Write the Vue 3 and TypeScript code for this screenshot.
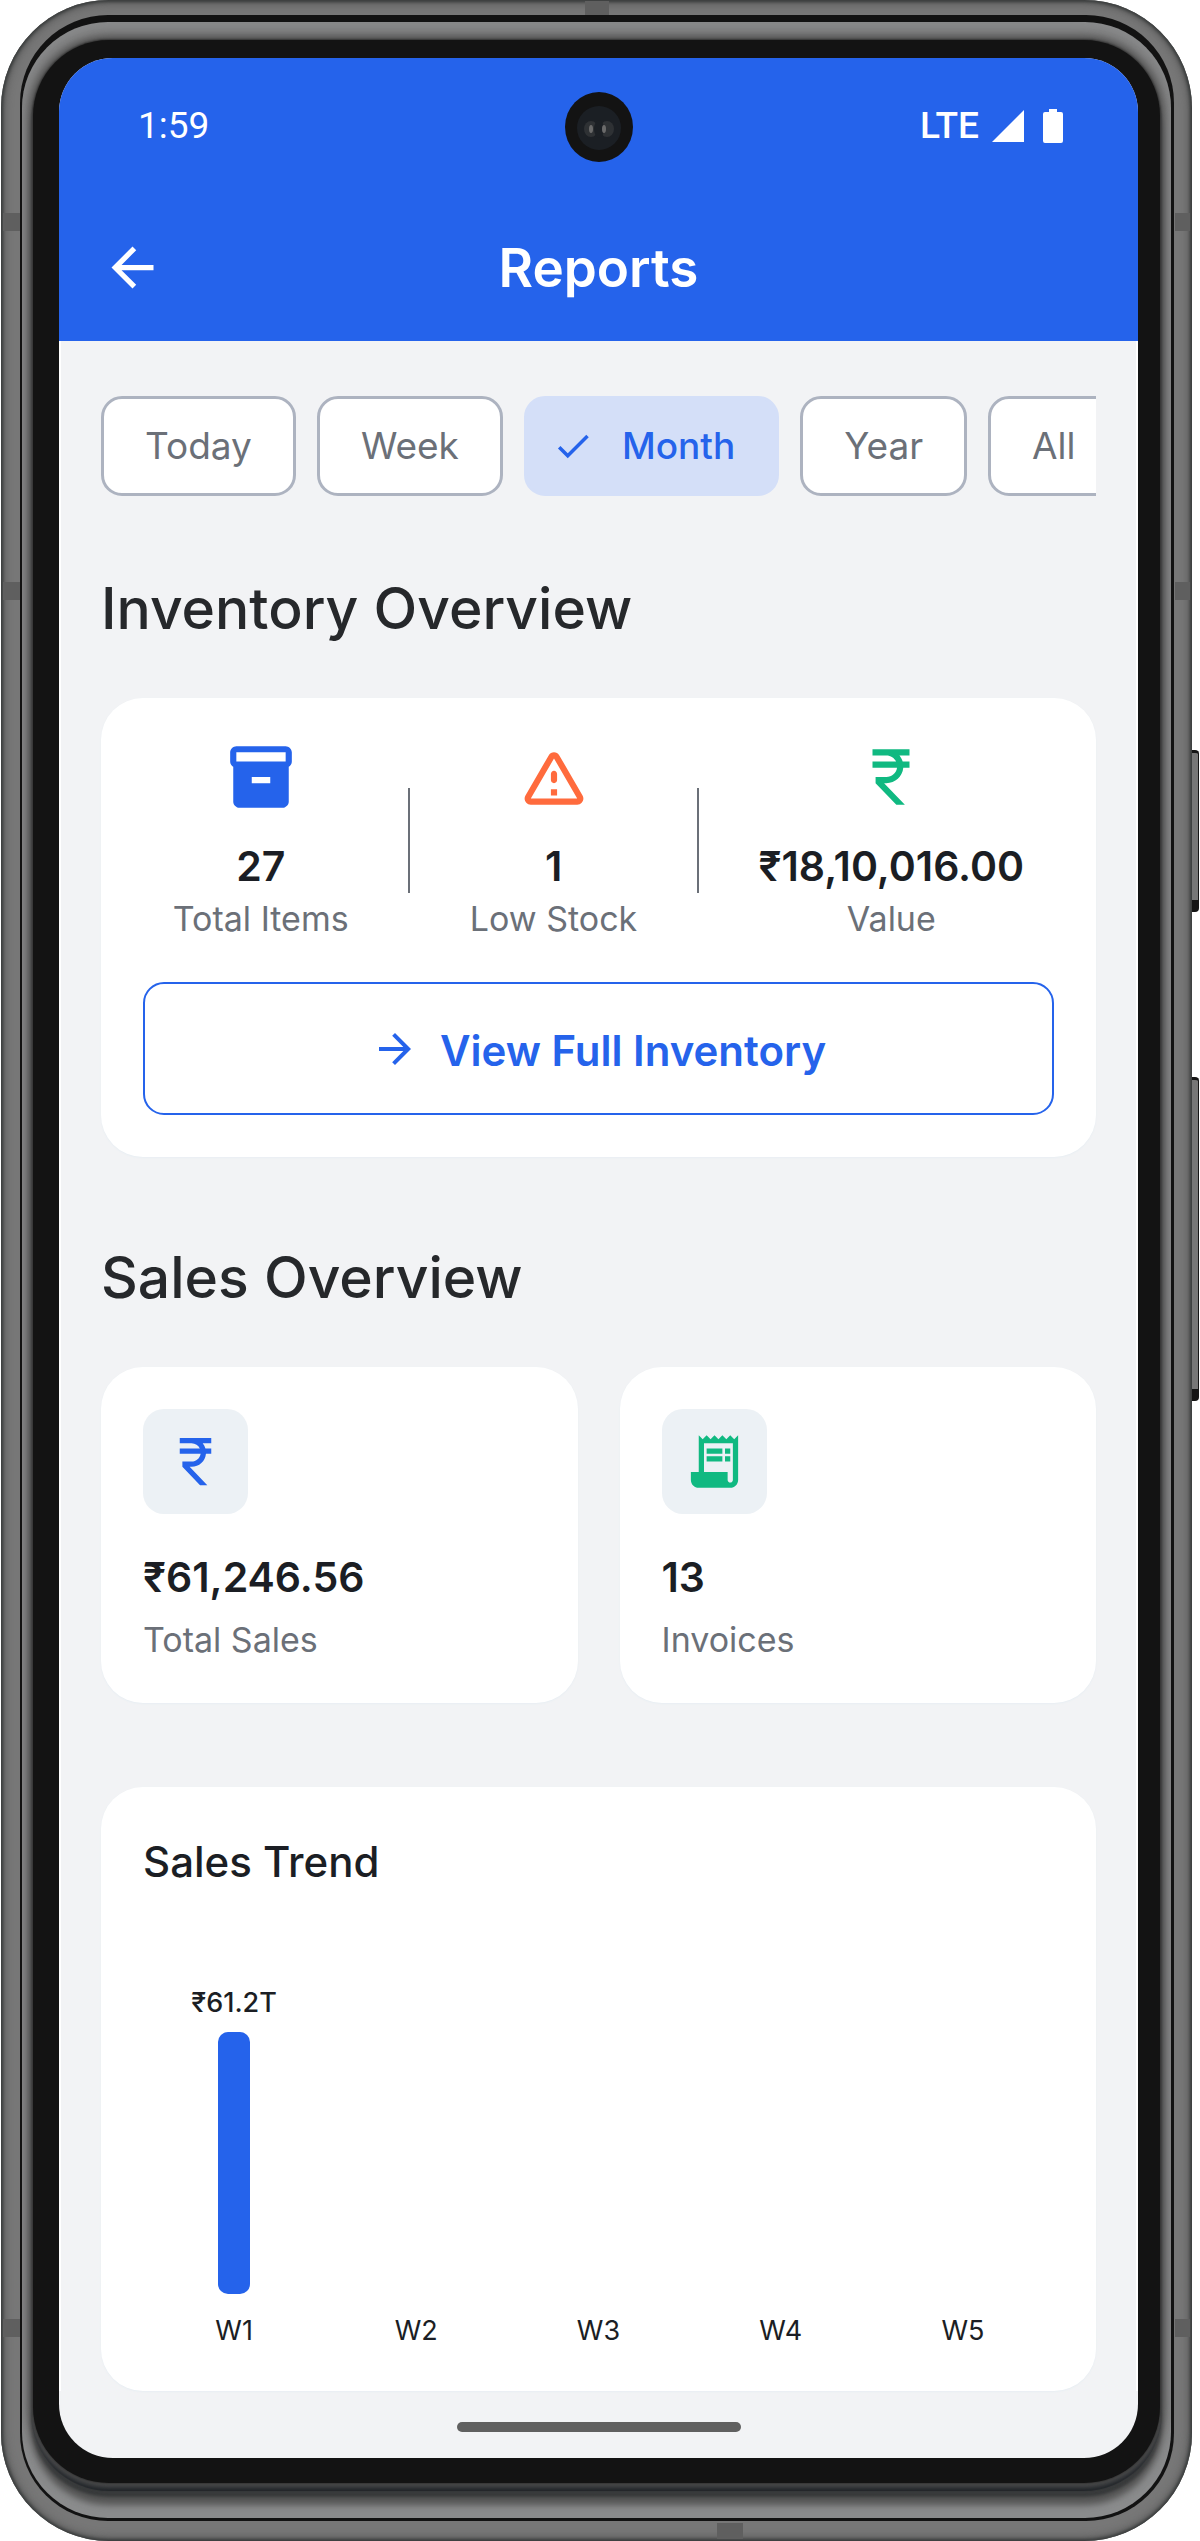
<script setup lang="ts">
import { ref } from 'vue'

interface Stat { icon: string; tone: string; value: string; label: string }
interface Week { label: string; amount: number; caption: string }

const icons: Record<string, string> = {
  back: 'M20 11H7.83l5.59-5.59L12 4l-8 8 8 8 1.41-1.41L7.83 13H20v-2z',
  forward: 'M12 4l-1.41 1.41L16.17 11H4v2h12.17l-5.58 5.59L12 20l8-8z',
  check: 'M9 16.17L4.83 12l-1.42 1.41L9 19 21 7l-1.41-1.41z',
  box: 'M20 2H4c-1 0-2 .9-2 2v3.01c0 .72.43 1.34 1 1.69V20c0 1.1 1.1 2 2 2h14c.9 0 2-.9 2-2V8.7c.57-.35 1-.97 1-1.69V4c0-1.1-1-2-2-2zm-5 12H9v-2h6v2zm5-7H4V4h16v3z',
  warning: 'M12 5.99L19.53 19H4.47L12 5.99M2.74 18c-.77 1.33.19 3 1.73 3h15.06c1.54 0 2.5-1.67 1.73-3L13.73 4.99c-.77-1.33-2.69-1.33-3.46 0L2.74 18zM11 11v2c0 .55.45 1 1 1s1-.45 1-1v-2c0-.55-.45-1-1-1s-1 .45-1 1zm0 5h2v2h-2z',
  rupee: 'M13.66 7c-.56-1.18-1.76-2-3.16-2H6V3h12v2h-3.26c.48.58.84 1.26 1.05 2H18v2h-2.02c-.25 2.8-2.61 5-5.48 5h-.73l6.73 7h-2.77L7 14v-2h3.5c1.76 0 3.22-1.3 3.46-3H6V7h7.66z',
  receipt: 'M19.5 3.5L18 2l-1.5 1.5L15 2l-1.5 1.5L12 2l-1.5 1.5L9 2 7.5 3.5 6 2v14H3v3c0 1.66 1.34 3 3 3h12c1.66 0 3-1.34 3-3V2l-1.5 1.5zM19 19c0 .55-.45 1-1 1s-1-.45-1-1v-3H8V5h11v14zM9 7h6v2H9zM16 7h2v2h-2zM9 10h6v2H9zM16 10h2v2h-2z',
}

const periods = ['Today', 'Week', 'Month', 'Year', 'All']
const period = ref('Month')

const inventory: Stat[] = [
  { icon: 'box', tone: 'blue', value: '27', label: 'Total Items' },
  { icon: 'warning', tone: 'orange', value: '1', label: 'Low Stock' },
  { icon: 'rupee', tone: 'green', value: '₹18,10,016.00', label: 'Value' },
]
const sales: Stat[] = [
  { icon: 'rupee', tone: 'blue', value: '₹61,246.56', label: 'Total Sales' },
  { icon: 'receipt', tone: 'green', value: '13', label: 'Invoices' },
]
const weeks: Week[] = [
  { label: 'W1', amount: 61246.56, caption: '₹61.2T' },
  { label: 'W2', amount: 0, caption: '' },
  { label: 'W3', amount: 0, caption: '' },
  { label: 'W4', amount: 0, caption: '' },
  { label: 'W5', amount: 0, caption: '' },
]
const axisMax = 83450
</script>

<template>
  <div class="device">
    <i class="band left b1"></i><i class="band left b2"></i><i class="band left b3"></i>
    <i class="band right b1"></i><i class="band right b2"></i><i class="band right b3"></i>
    <i class="band top"></i><i class="band bottom"></i>
    <i class="key power"></i><i class="key volume"></i>
    <div class="seam">
      <div class="rim">
        <div class="glass">
          <div class="screen">
            <header class="top-area">
              <div class="status">
                <span class="clock">1:59</span>
                <span class="camera">
                  <svg viewBox="0 0 68 70" width="68" height="70" aria-hidden="true">
                    <ellipse cx="34" cy="35" rx="34" ry="35" fill="#131313" />
                    <circle cx="34" cy="36" r="22" fill="#1b1f24" />
                    <ellipse cx="26" cy="37" rx="7" ry="8" fill="#2e3134" />
                    <ellipse cx="42" cy="37" rx="7" ry="8" fill="#2e3134" />
                    <ellipse cx="34" cy="37" rx="5" ry="9" fill="#1b1f24" />
                    <ellipse cx="26" cy="37" rx="2" ry="4" fill="#6a6a6a" />
                    <ellipse cx="39" cy="37" rx="2" ry="4" fill="#6a6a6a" />
                  </svg>
                </span>
                <span class="signals">
                  <span class="network">LTE</span>
                  <svg class="cell" viewBox="0 0 32 32" width="32" height="32" aria-hidden="true"><path d="M32 0v32H0z" fill="#fff" /></svg>
                  <svg viewBox="0 0 20 34" width="20" height="34" aria-hidden="true"><path d="M6 0h8v3h4a2 2 0 0 1 2 2v27a2 2 0 0 1-2 2H2a2 2 0 0 1-2-2V5a2 2 0 0 1 2-2h4z" fill="#fff" /></svg>
                </span>
              </div>
              <div class="app-bar">
                <button class="back" type="button" aria-label="Back">
                  <svg viewBox="0 0 24 24" width="63" height="63" aria-hidden="true"><path :d="icons.back" fill="currentColor" /></svg>
                </button>
                <h1>Reports</h1>
              </div>
            </header>

            <main class="content">
              <div class="chips">
                <button
                  v-for="p in periods" :key="p" type="button" class="chip"
                  :class="{ selected: p === period }" :aria-pressed="p === period" @click="period = p"
                >
                  <svg v-if="p === period" viewBox="0 0 24 24" width="42" height="42" aria-hidden="true"><path :d="icons.check" fill="currentColor" /></svg>
                  {{ p }}
                </button>
              </div>

              <section>
                <h2>Inventory Overview</h2>
                <div class="card">
                  <div class="stats">
                    <template v-for="(s, i) in inventory" :key="s.label">
                      <span v-if="i > 0" class="divider"></span>
                      <div class="stat">
                        <svg :class="s.tone" viewBox="0 0 24 24" width="74" height="74" aria-hidden="true"><path :d="icons[s.icon]" fill="currentColor" fill-rule="evenodd" /></svg>
                        <span class="value">{{ s.value }}</span>
                        <span class="label">{{ s.label }}</span>
                      </div>
                    </template>
                  </div>
                  <button class="outlined" type="button">
                    <svg viewBox="0 0 24 24" width="48" height="48" aria-hidden="true"><path :d="icons.forward" fill="currentColor" /></svg>
                    <span>View Full Inventory</span>
                  </button>
                </div>
              </section>

              <section>
                <h2>Sales Overview</h2>
                <div class="tiles">
                  <div v-for="s in sales" :key="s.label" class="card tile">
                    <span class="badge" :class="s.tone">
                      <svg viewBox="0 0 24 24" width="63" height="63" aria-hidden="true"><path :d="icons[s.icon]" fill="currentColor" fill-rule="evenodd" /></svg>
                    </span>
                    <span class="value">{{ s.value }}</span>
                    <span class="label">{{ s.label }}</span>
                  </div>
                </div>
              </section>

              <section class="card trend">
                <h3>Sales Trend</h3>
                <div class="chart">
                  <div v-for="w in weeks" :key="w.label" class="week">
                    <div class="plot">
                      <span class="caption">{{ w.caption }}</span>
                      <span v-if="w.amount" class="bar" :style="{ height: (w.amount / axisMax) * 100 + '%' }"></span>
                    </div>
                    <span class="tick">{{ w.label }}</span>
                  </div>
                </div>
              </section>
            </main>
            <footer class="nav"><span class="handle"></span></footer>
          </div>
        </div>
      </div>
    </div>
  </div>
</template>

<style>
body { background: #fff; }
</style>

<style scoped>
* { box-sizing: border-box; }
.device {
  position: relative;
  margin: 0 8px 0 1px;
  padding: 15px 18px 20px 19px;
  border-radius: 108px;
  background: #777;
  box-shadow: inset 0 0 3px 2px #3a3d3d, inset 0 0 8px 3px #555;
  font-family: Inter, "Noto Sans", sans-serif;
  color: #1b1e24;
}
.seam { padding: 7px 3px 3px 2px; border-radius: 88px; background: #121212; }
.rim {
  overflow: hidden;
  padding: 18px 11px 35px;
  border-radius: 86px;
  background: #8a8b8c;
}
.glass {
  padding: 18px 22px 25px 26px;
  border-radius: 76px;
  background: #131313;
  box-shadow: 0 0 2px 1px #333, 0 0 6px 4px #555, 0 6px 1px 2px #1b1f24, 0 12px 3px 2px #383a3b, 0 20px 6px 2px #555, 0 0 14px 8px #717171;
}
.screen { position: relative; overflow: hidden; border-radius: 54px; background: #f2f3f5; }

.band { position: absolute; background: #5f5f5f; }
.left { left: 2px; width: 17px; height: 18px; }
.right { right: 2px; width: 15px; height: 18px; }
.b1 { top: 213px; }
.b2 { top: 582px; }
.b3 { top: 2319px; }
.top { top: 1px; left: 584px; width: 24px; height: 14px; }
.bottom { bottom: 2px; left: 716px; width: 26px; height: 16px; }
.key {
  position: absolute;
  right: -7px;
  width: 7px;
  border: solid #151515;
  border-width: 3px 1px 12px 0;
  border-radius: 0 4px 4px 0;
  background: #777;
}
.power { top: 750px; height: 162px; }
.volume { top: 1077px; height: 324px; }

.top-area { background: #2563eb; color: #fff; }
.status {
  position: relative;
  display: flex;
  align-items: center;
  justify-content: space-between;
  height: 136px;
  padding: 0 75px 0 79px;
  font: 400 37px/44px Roboto, sans-serif;
}
.network { font-weight: 500; }
.camera { position: absolute; left: 50%; top: 34px; width: 68px; height: 70px; margin-left: -34px; }
.camera svg, .signals svg, .back svg { display: block; }
.signals { display: flex; align-items: center; }
.cell { margin: 0 19px 0 13px; }
.app-bar { display: grid; grid-template-columns: 63px 1fr 63px; align-items: center; height: 147px; padding: 0 42px; }
button { font: inherit; cursor: pointer; }
.back { padding: 0; border: 0; background: none; color: inherit; }
h1, h2, h3 { margin: 0; }
h1 { font-size: 53px; line-height: 64px; font-weight: 600; text-align: center; }

.content { display: flex; flex-direction: column; gap: 84px; padding: 55px 40px 0; border: solid #fff; border-width: 0 2px; }
.chips { display: flex; gap: 21px; overflow: hidden; margin-bottom: -8px; }
.chip {
  display: flex;
  flex: none;
  align-items: center;
  gap: 28px;
  height: 100px;
  padding: 0 41px;
  border: 3px solid #adb3c0;
  border-radius: 21px;
  background: #fff;
  color: #6b7078;
  font-size: 37px;
  line-height: 52px;
}
.selected { padding-left: 25px; border-color: #d4dff8; background: #d4dff8; color: #2563eb; font-weight: 500; }
h2 { margin-bottom: 52px; font-size: 57px; line-height: 74px; font-weight: 500; color: #26282b; }
.card { padding: 42px; border-radius: 42px; background: #fff; box-shadow: 0 1px 2px #e8eef3; }
.stats { display: flex; align-items: center; justify-content: space-around; margin-bottom: 42px; }
.stat { display: flex; flex-direction: column; align-items: center; }
.stat svg { margin-bottom: 21px; }
.divider { width: 2px; height: 105px; background: #6b7078; }
.value { font-size: 41px; line-height: 63px; font-weight: 600; }
.label { font-size: 34px; line-height: 42px; color: #6b7078; }
.blue { color: #2563eb; }
.orange { color: #ff6b3d; }
.green { color: #10b981; }
.outlined {
  display: flex;
  align-items: center;
  justify-content: center;
  gap: 21px;
  width: 100%;
  height: 133px;
  border: 2px solid #2563eb;
  border-radius: 21px;
  background: #fff;
  color: #2563eb;
  font-size: 42px;
  line-height: 52px;
  font-weight: 600;
}
.outlined span { padding-top: 4px; }
.tiles { display: grid; grid-template-columns: 1fr 1fr; gap: 42px; }
.tile { display: flex; flex-direction: column; }
.badge {
  display: grid;
  place-items: center;
  width: 105px;
  height: 105px;
  margin-bottom: 32px;
  border-radius: 21px;
  background: #ecf1f5;
}
.tile .label { margin-top: 10px; }
h3 { font-size: 42px; line-height: 66px; font-weight: 500; }
.chart { display: grid; grid-template-columns: repeat(5, 1fr); margin-top: 42px; }
.week { display: flex; flex-direction: column; align-items: center; }
.plot { display: flex; flex-direction: column; align-items: center; justify-content: flex-end; height: 357px; }
.caption { margin-bottom: 12px; font-size: 27px; line-height: 34px; font-weight: 500; }
.bar { width: 32px; flex: none; border-radius: 10px; background: #2563eb; }
.tick { margin-top: 19px; font-size: 27px; line-height: 36px; }
.nav { display: flex; justify-content: center; padding: 31px 0 26px; }
.handle { width: 284px; height: 10px; border-radius: 5px; background: #606060; }
</style>
